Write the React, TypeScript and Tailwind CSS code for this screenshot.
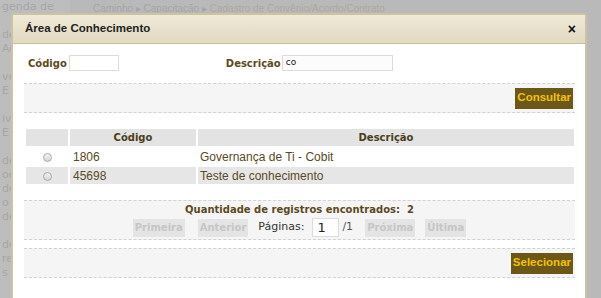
import React from 'react';

const sideWords = ['genda de', '', 'de', 'Ac', '', 'ver', 'E', '', 'ive', 'E', '', 'de', 'oci', 'de', 'o', 'de', '', 'de', 'rea', 's'];

function Radio() {
  return (
    <span className="inline-block h-[9px] w-[9px] rounded-full border border-[#a9a9a9] bg-gradient-to-b from-[#f4f4f4] to-[#d6d6d6] align-middle" />
  );
}

function PagerButton({ label }: { label: string }) {
  return (
    <span className="flex h-[18px] items-center bg-[#e4e4e4] px-[2px] text-[10px] font-bold text-[#c6c6c6]">
      {label}
    </span>
  );
}

function ActionButton({ label }: { label: string }) {
  return (
    <button className="flex h-[21px] items-center bg-[#6b5718] px-[2px] font-['Liberation_Sans',sans-serif] text-[11.5px] font-bold text-[#f2c200]">
      {label}
    </button>
  );
}

const rows = [
  { code: '1806', desc: 'Governança de Ti - Cobit' },
  { code: '45698', desc: 'Teste de conhecimento' },
];

export default function App() {
  return (
    <div className="relative h-[298px] w-[601px] overflow-hidden bg-[#b9b9b9] font-['DejaVu_Sans',sans-serif]">
      {/* page behind the overlay */}
      <div className="flex h-full">
        <div className="flex w-[70px] flex-col gap-[1px] bg-[#bdbdbd] pl-[2px] text-[11px] leading-[13px] text-[#a6a6a6]">
          {sideWords.map((w, i) => (
            <span key={i} className="h-[13px]">{w}</span>
          ))}
        </div>
        <div className="flex flex-1 flex-col">
          <div className="px-[23px] pt-[1px] font-['Liberation_Sans',sans-serif] text-[10px] text-[#a5a5a8]">
            Caminho ▸ Capacitação ▸ <span className="text-[#b0a8a0]">Cadastro de Convênio/Acordo/Contrato</span>
          </div>
        </div>
      </div>

      {/* dialog */}
      <div className="absolute left-[11px] top-[13px] w-[576px] rounded-t-[3px] border-2 border-[#cbc3a4] bg-white">
        <div className="flex h-[29px] items-center justify-between border-b border-[#c9bf9c] bg-gradient-to-b from-[#efe9d7] to-[#e2d9c0] pl-[12px] pr-[9px] font-['Liberation_Sans',sans-serif]">
          <span className="text-[11.5px] font-bold text-[#222]">Área de Conhecimento</span>
          <span className="text-[14px] font-bold leading-none text-[#111]">×</span>
        </div>

        <div className="pl-[11px] pr-[10px] pt-[11px] pb-[40px]">
          <div className="flex h-[16px] items-center">
            <span className="ml-[4px] text-[10px] font-bold text-[#5b4a1e]">Código</span>
            <span className="ml-[2px] h-[16px] w-[50px] border border-[#dcdcdc] bg-white" />
            <span className="ml-[107px] text-[10px] font-bold text-[#5b4a1e]">Descrição</span>
            <span className="ml-[1px] flex h-[16px] w-[111px] items-center border border-[#dcdcdc] bg-[#fcfcfc] pl-[3px] text-[9px] text-[#111]">
              co
            </span>
          </div>

          <div className="mt-[12px] flex h-[30px] items-center justify-end border-y border-dashed border-[#d2d2d2] bg-[#f5f5f5] pr-[2px]">
            <ActionButton label="Consultar" />
          </div>

          <table className="mt-[14px] w-[552px] border-separate border-spacing-[2px] font-['Liberation_Sans',sans-serif] text-[12px] text-[#5a4a24]">
            <thead>
              <tr>
                <th className="h-[17px] w-[42px] bg-[#e3e3e3] p-0" />
                <th className="h-[17px] w-[126px] bg-[#e3e3e3] p-0 font-['DejaVu_Sans',sans-serif] text-[10px] font-bold text-[#4b3d1b]">Código</th>
                <th className="h-[17px] bg-[#e3e3e3] p-0 font-['DejaVu_Sans',sans-serif] text-[10px] font-bold text-[#4b3d1b]">Descrição</th>
              </tr>
            </thead>
            <tbody>
              {rows.map((r, i) => (
                <tr key={r.code} className={i % 2 ? 'bg-[#e6e6e6]' : 'bg-white'}>
                  <td className="h-[17px] p-0 text-center leading-[14px]">
                    <Radio />
                  </td>
                  <td className="h-[17px] p-0 pl-[3px] leading-[14px]">{r.code}</td>
                  <td className="h-[17px] p-0 pl-[2px] leading-[14px]">{r.desc}</td>
                </tr>
              ))}
            </tbody>
          </table>

          <div className="mt-[14px] flex h-[40px] flex-col items-center border-y border-dashed border-[#d2d2d2] bg-[#f5f5f5] pt-[2px]">
            <span className="text-[10px] font-bold leading-[13px] text-[#5b4a1e]">
              Quantidade de registros encontrados:&nbsp;&nbsp;2
            </span>
            <div className="mt-[2px] flex items-center">
              <PagerButton label="Primeira" />
              <span className="w-[13px]" />
              <PagerButton label="Anterior" />
              <span className="ml-[10px] text-[11px] text-[#333]">Páginas:</span>
              <span className="ml-[8px] flex h-[19px] w-[27px] items-center border border-[#dcdcdc] bg-white pl-[4px] text-[13px] text-[#222]">
                1
              </span>
              <span className="ml-[3px] text-[11px] text-[#555]">/1</span>
              <span className="w-[12px]" />
              <PagerButton label="Próxima" />
              <span className="w-[10px]" />
              <PagerButton label="Última" />
            </div>
          </div>

          <div className="mt-[8px] flex h-[30px] items-center justify-end border-y border-dashed border-[#d2d2d2] bg-[#f5f5f5] pr-[2px]">
            <ActionButton label="Selecionar" />
          </div>
        </div>
      </div>
    </div>
  );
}
